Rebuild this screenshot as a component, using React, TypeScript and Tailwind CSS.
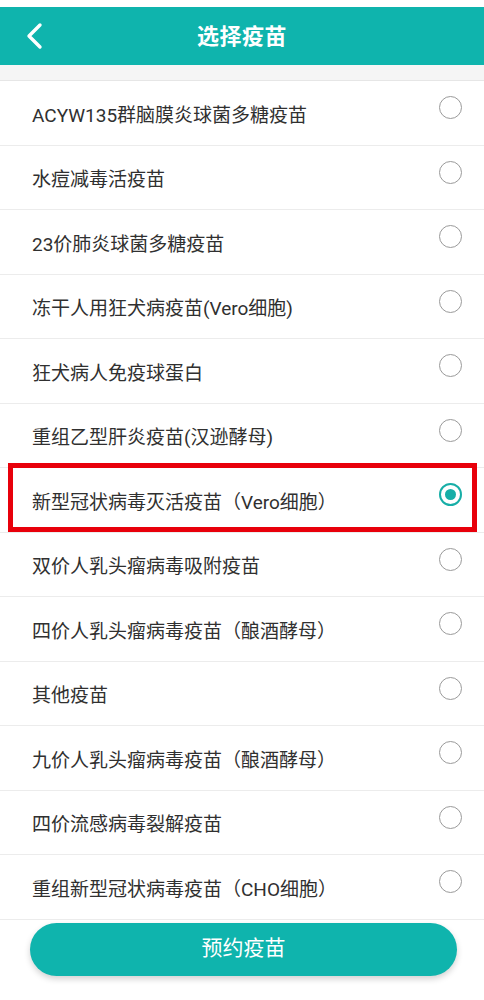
import React from "react";

const items = [
  "ACYW135群脑膜炎球菌多糖疫苗",
  "水痘减毒活疫苗",
  "23价肺炎球菌多糖疫苗",
  "冻干人用狂犬病疫苗(Vero细胞)",
  "狂犬病人免疫球蛋白",
  "重组乙型肝炎疫苗(汉逊酵母)",
  "新型冠状病毒灭活疫苗（Vero细胞）",
  "双价人乳头瘤病毒吸附疫苗",
  "四价人乳头瘤病毒疫苗（酿酒酵母）",
  "其他疫苗",
  "九价人乳头瘤病毒疫苗（酿酒酵母）",
  "四价流感病毒裂解疫苗",
  "重组新型冠状病毒疫苗（CHO细胞）",
];

export default function App() {
  const selected = 6;
  return (
    <div
      className="w-[484px] h-[1000px] bg-white overflow-hidden flex flex-col"
      style={{ fontFamily: 'Roboto, "Noto Sans CJK SC", sans-serif' }}
    >
      <div className="h-[7px] bg-white" />
      <div className="h-[58px] bg-[#0fb4ad] relative flex items-center justify-center">
        <svg
          className="absolute left-[24px] top-[15px]"
          width="22"
          height="28"
          viewBox="0 0 22 28"
          fill="none"
        >
          <path d="M16 3 L5 14 L16 25" stroke="white" strokeWidth="3.4" strokeLinecap="round" strokeLinejoin="round" />
        </svg>
        <span className="text-white text-[22px] font-bold tracking-[0.5px]">选择疫苗</span>
      </div>
      <div className="h-[16px] bg-[#f5f5f5] border-b border-[#e6e6e6]" />
      <div className="flex flex-col">
        {items.map((t, i) => (
          <div
            key={i}
            className="relative h-[64.5px] border-b-[1.5px] border-[#ececec] flex items-center pl-[32px] pr-[22px]"
          >
            <span className="flex-1 text-[19px] text-[#303030] leading-none pt-[5px]">{t}</span>
            <div className="mb-[10px]">
              {i === selected ? (
                <div className="w-[23px] h-[23px] rounded-full border-2 border-[#17aea7] flex items-center justify-center">
                  <div className="w-[11px] h-[11px] rounded-full bg-[#17aea7]" />
                </div>
              ) : (
                <div className="w-[23px] h-[23px] rounded-full border border-[#9a9a9a]" />
              )}
            </div>
            {i === selected && (
              <div className="absolute left-[8px] right-[7px] top-[-5px] bottom-[0px] border-[5px] border-[#e8000b]" />
            )}
          </div>
        ))}
      </div>
      <div className="px-[30px] pt-[3px] pr-[27px]">
        <div className="h-[53px] rounded-full bg-[#0fb4ad] flex items-center justify-center shadow-[0_3px_6px_rgba(0,0,0,0.18)]">
          <span className="text-white text-[21px]">预约疫苗</span>
        </div>
      </div>
    </div>
  );
}
